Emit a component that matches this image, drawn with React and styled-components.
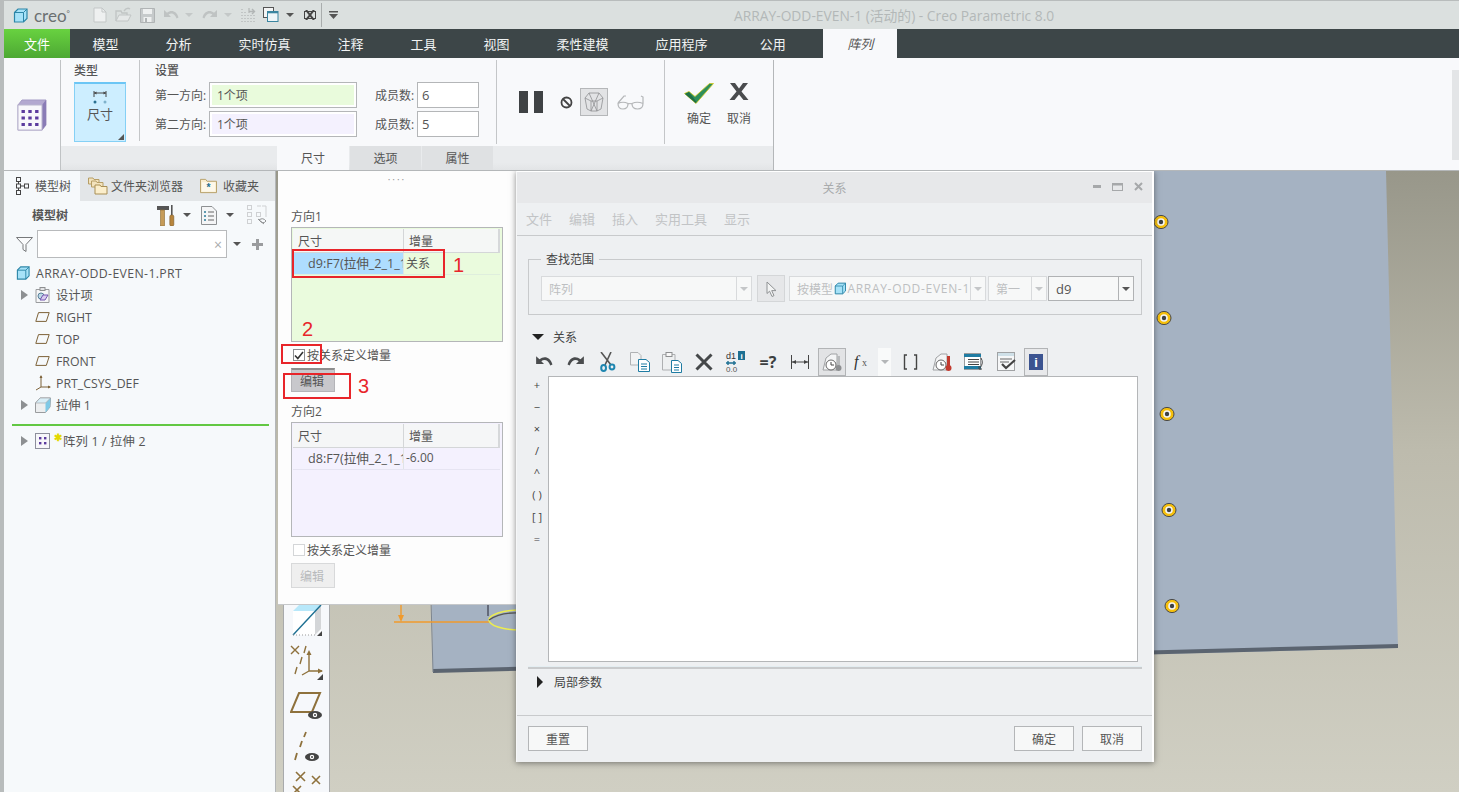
import React from 'react'
import styled, { createGlobalStyle } from 'styled-components'

const GlobalStyle = createGlobalStyle`
  html, body { margin: 0; padding: 0; background: #b8bcbc; overflow: hidden; }
  * { box-sizing: border-box; }
  body { font-family: "Open Sans", "Noto Sans CJK SC", sans-serif; font-size: 12px; color: #555; }
`

const Page = styled.div`
  width: 1459px;
  height: 792px;
  padding: 1px 0 0 4px;
  overflow: hidden;
  display: flex;
  flex-direction: column;
  background: #b8bcbc;
`

/* ---------- title bar ---------- */
const TitleBar = styled.div`
  height: 28px;
  flex: none;
  display: flex;
  align-items: center;
  background: #dbe0df;
  padding-left: 9px;
`
const Logo = styled.span`
  font-family: "Lato", sans-serif;
  font-size: 17px;
  color: #6b7072;
  margin-left: 6px;
  width: 60px;
  sup { font-size: 8px; line-height: 0; vertical-align: 6px; }
`
const QuickIcon = styled.span`
  display: flex;
  align-items: center;
  margin-left: ${p => p.$ml ?? 0}px;
`
const QuickSep = styled.span`
  width: 1px;
  height: 24px;
  background: #a9adad;
  margin: 0 7px 0 5px;
`
const AppTitle = styled.div`
  margin-left: 396px;
  font-size: 13.8px;
  color: #b3b8b8;
  white-space: nowrap;
`

/* ---------- menu ---------- */
const MenuBar = styled.div`
  height: 29px;
  flex: none;
  display: flex;
  background: #3d4648;
`
const FileTab = styled.div`
  width: 66px;
  margin-right: -1px;
  display: flex;
  align-items: center;
  justify-content: center;
  color: #fff;
  font-size: 13px;
  background: linear-gradient(#68d240, #4da833);
`
const MenuTab = styled.div`
  padding: 0 23.5px;
  margin-left: ${p => p.$ml ?? 0}px;
  display: flex;
  align-items: center;
  color: #f1f3f3;
  font-size: 13px;
  white-space: nowrap;
`
const ActiveMenuTab = styled.div`
  width: 74px;
  margin-left: 14px;
  display: flex;
  align-items: center;
  justify-content: center;
  background: #f8f9fb;
  color: #555;
  font-size: 13px;
  font-style: italic;
`

/* ---------- ribbon ---------- */
const Ribbon = styled.div`
  height: 113px;
  flex: none;
  display: flex;
  background: #f8f9fb;
  border-bottom: 1px solid #b4b7b9;
`
const RibbonIconCell = styled.div`
  width: 57px;
  flex: none;
  display: flex;
  align-items: center;
  padding-left: 13px;
  border-right: 1px solid #c0c3c5;
  margin-top: 2px;
`
const RibbonMain = styled.div`
  width: 713px;
  flex: none;
  display: flex;
  flex-direction: column;
  border-right: 1px solid #b4b7b9;
  margin-top: 2px;
`
const RibbonGroups = styled.div`
  height: 86px;
  display: flex;
`
const Group = styled.div`
  width: ${p => p.$w}px;
  flex: none;
  padding-left: ${p => p.$pl}px;
  border-right: ${p => (p.$line ? '1px solid #c4c6c8' : 'none')};
  height: ${p => p.$h ?? 84}px;
`
const GroupLabel = styled.div`
  height: 20px;
  margin-bottom: 2px;
  display: flex;
  align-items: center;
  font-size: 12px;
  color: #555;
  font-weight: 500;
`
const TypeCard = styled.div`
  width: 52px;
  height: 60px;
  position: relative;
  background: #cdeeff;
  border: 1px solid #85d0f5;
  border-top: 2px solid #6cc6f5;
  display: flex;
  flex-direction: column;
  align-items: center;
  padding-top: 6px;
  gap: 1px;
  font-size: 13px;
  line-height: 16px;
  color: #555;
`
const Corner = styled.i`
  position: absolute;
  right: 1px;
  bottom: 1px;
  width: 0;
  height: 0;
  border-style: solid;
  border-width: 0 0 6px 6px;
  border-color: transparent transparent #555 transparent;
`
const SettingGrid = styled.div`
  display: grid;
  grid-template-columns: 54px 148px 18px 42px 62px;
  grid-auto-rows: 26px;
  row-gap: 3px;
  align-items: center;
`
const FieldName = styled.span`
  color: #555;
  white-space: nowrap;
  grid-column: ${p => p.$col};
`
const CollectorBox = styled.div`
  height: 26px;
  border: 1px solid #b4b6b8;
  padding: 2px;
  background: #fff;
`
const CollectorFill = styled.div`
  height: 100%;
  background: ${p => p.$tint};
  padding-left: 5px;
  display: flex;
  align-items: center;
  color: #555;
`
const NumberBox = styled.div`
  height: 26px;
  border: 1px solid #b4b6b8;
  background: #fff;
  padding-left: 4px;
  display: flex;
  align-items: center;
  font-size: 13px;
  color: #555;
`
const ActionRow = styled.div`
  display: flex;
  align-items: center;
  padding-top: 28px;
`
const ToggleBox = styled.div`
  width: 28px;
  height: 28px;
  background: #e2e3e5;
  border: 1px solid #b5b7b9;
  display: flex;
  align-items: center;
  justify-content: center;
  margin-left: 7px;
`
const BigActions = styled.div`
  display: flex;
`
const BigAction = styled.div`
  width: 40px;
  display: flex;
  flex-direction: column;
  align-items: center;
  padding-top: 23px;
  gap: 4px;
  color: #555;
`
const BigActionIcon = styled.div`
  height: 22px;
  display: flex;
  align-items: flex-start;
  justify-content: center;
`
const RibbonTabs = styled.div`
  height: 24px;
  flex: none;
  display: flex;
  background: linear-gradient(#e9ebed 70%, #e2e4e6);
  padding-left: 216px;
`
const RibbonTab = styled.div`
  width: ${p => p.$w}px;
  display: flex;
  align-items: center;
  justify-content: center;
  margin-right: 1px;
  color: #555;
  background: ${p => (p.$active ? '#f8f9fb' : '#dfe1e3')};
`
const RibbonEnd = styled.div`
  flex: 1;
  display: flex;
  justify-content: flex-end;
  padding-top: 12px;
`
const RibbonStub = styled.div`
  width: 7px;
  height: 90px;
  background: #e3e5e7;
`

/* ---------- main area ---------- */
const Body = styled.div`
  flex: 1;
  min-height: 0;
  display: flex;
`
const LeftPanel = styled.div`
  width: 272px;
  flex: none;
  background: #f6f9fb;
  border-right: 1px solid #b4b7b9;
  display: flex;
  flex-direction: column;
`
const PanelTabs = styled.div`
  height: 30px;
  flex: none;
  display: flex;
  background: #e3e6e8;
`
const PanelTab = styled.div`
  display: flex;
  align-items: center;
  width: ${p => p.$w}px;
  padding-left: ${p => p.$pl}px;
  gap: ${p => p.$gap}px;
  color: #555;
  white-space: nowrap;
  background: ${p => (p.$active ? '#f6f9fb' : 'transparent')};
`
const TreeToolbar = styled.div`
  height: 28px;
  flex: none;
  display: flex;
  align-items: center;
  padding-left: 28px;
`
const TreeTitle = styled.div`
  width: 125px;
  font-weight: 700;
  color: #555;
`
const SearchRow = styled.div`
  height: 28px;
  flex: none;
  margin-top: 1px;
  display: flex;
  align-items: center;
  padding-left: 12px;
`
const SearchBox = styled.div`
  width: 190px;
  height: 28px;
  margin-left: 4px;
  background: #fff;
  border: 1px solid #b8babc;
  display: flex;
  align-items: center;
  justify-content: flex-end;
  padding-right: 4px;
  color: #a9abad;
  font-size: 14px;
`
const Tree = styled.div`
  margin-top: 4px;
  display: flex;
  flex-direction: column;
`
const TreeRow = styled.div`
  height: 22px;
  display: flex;
  align-items: center;
  padding-left: ${p => p.$pl}px;
  font-size: 12.3px;
  letter-spacing: ${p => p.$track ?? 0}px;
  color: #555;
  white-space: nowrap;
`
const Twisty = styled.i`
  width: 0;
  height: 0;
  margin-right: 7px;
  border-style: solid;
  border-width: 5px 0 5px 7px;
  border-color: transparent transparent transparent #8d9092;
`
const RowIcon = styled.span`
  width: ${p => p.$w ?? 21}px;
  flex: none;
  display: flex;
  align-items: center;
`
const Star = styled.span`
  width: 9px;
  flex: none;
  color: #e3d800;
  font-size: 10px;
  font-weight: 700;
  line-height: 1;
  align-self: flex-start;
  margin-top: 2px;
`
const GreenRule = styled.div`
  height: 2px;
  margin: 8px 6px 4px 8px;
  background: #62c843;
`

const Viewport = styled.div`
  flex: 1;
  position: relative;
  overflow: hidden;
  background: linear-gradient(#98978a, #bdbbad 45%, #d0cfc3);
`
const Scene = styled.svg`
  position: absolute;
  inset: 0;
  display: block;
`
const SideBar = styled.div`
  position: absolute;
  left: 7px;
  top: 434px;
  bottom: 0;
  width: 47px;
  background: #f6f8fb;
  border-left: 1px solid #a8aaac;
  border-right: 1px solid #a8aaac;
  display: flex;
  flex-direction: column;
  align-items: center;
`
const SideTool = styled.div`
  height: ${p => p.$h}px;
  flex: none;
  display: flex;
  align-items: flex-start;
`

/* ---------- pattern panel ---------- */
const PatternPanel = styled.div`
  position: absolute;
  left: 2px;
  top: 0;
  width: 246px;
  height: 434px;
  background: #fdfdfd;
  border-bottom: 1px solid #c6c8ca;
  padding: 0 0 0 13px;
`
const Grip = styled.div`
  height: 16px;
  width: 212px;
  text-align: center;
  color: #999;
  font-size: 10px;
  line-height: 16px;
  letter-spacing: 2px;
`
const DirLabel = styled.div`
  height: 14px;
  line-height: 14px;
  margin-top: ${p => p.$mt}px;
  color: #555;
`
const IncTable = styled.div`
  width: 212px;
  height: 115px;
  margin-top: ${p => p.$mt}px;
  background: ${p => p.$tint};
  border: 1px solid #b4b6b8;
  padding: 1px 2px 0 1px;
`
const TableRow = styled.div`
  display: grid;
  grid-template-columns: 110px 1fr;
  height: ${p => p.$h}px;
  color: #555;
  background: ${p => p.$bg ?? 'transparent'};
  border-bottom: 1px solid ${p => p.$line};
  border-right: ${p => (p.$stub ? '2px solid #d6d8da' : 'none')};
`
const HeadCell = styled.div`
  display: flex;
  align-items: center;
  padding-left: ${p => p.$pl}px;
  & + & { border-left: 1px solid #d4d6d8; }
`
const DataCell = styled.div`
  display: flex;
  align-items: center;
  overflow: hidden;
  white-space: nowrap;
  font-size: ${p => p.$fs ?? 12}px;
  padding-left: ${p => p.$pl}px;
  padding-bottom: 2px;
  background: ${p => p.$bg ?? 'transparent'};
  & + & { border-left: 1px solid #e0e4e6; }
`
const CheckRow = styled.div`
  height: 18px;
  margin-top: 4px;
  padding-left: 2px;
  display: flex;
  align-items: center;
  gap: 2px;
  color: #555;
`
const Check = styled.div`
  width: 12px;
  height: 12px;
  background: #fff;
  border: 1px solid ${p => (p.$on ? '#8c8e90' : '#d4d6d8')};
  display: flex;
  align-items: center;
  justify-content: center;
`
const EditBtn = styled.div`
  width: 44px;
  height: ${p => p.$h}px;
  margin-top: 4px;
  padding-right: 2px;
  display: flex;
  align-items: center;
  justify-content: center;
  background: ${p => (p.$on ? '#c8c8cc' : '#efefef')};
  border: 1px solid ${p => (p.$on ? '#b4b4b8' : '#d8d9da')};
  border-top: ${p => (p.$on ? '2px solid #8e8e8e' : '1px solid #d8d9da')};
  color: ${p => (p.$on ? '#555' : '#b8babc')};
`
const RedBox = styled.div`
  position: absolute;
  left: ${p => p.$x}px;
  top: ${p => p.$y}px;
  width: ${p => p.$w}px;
  height: ${p => p.$h}px;
  border: 2px solid #e8252a;
`
const RedDigit = styled.div`
  position: absolute;
  left: ${p => p.$x}px;
  top: ${p => p.$y}px;
  font-family: "Liberation Sans", sans-serif;
  font-size: 20px;
  line-height: 20px;
  color: #e8252a;
`

/* ---------- relation dialog ---------- */
const Dialog = styled.div`
  position: absolute;
  left: 240px;
  top: 0;
  width: 638px;
  height: 591px;
  background: #eef0f2;
  border-top: 1px solid #fff;
  border-left: 1px solid #f6f7f8;
  border-right: 2px solid #fff;
  box-shadow: 0 1px 6px rgba(40, 40, 40, 0.55);
  display: flex;
  flex-direction: column;
`
const DialogTitle = styled.div`
  height: 31px;
  flex: none;
  display: flex;
  align-items: center;
  justify-content: center;
  position: relative;
  background: #e7e8ea;
  color: #a8aaac;
`
const WindowButtons = styled.div`
  position: absolute;
  right: 9px;
  top: 10px;
  display: flex;
  gap: 11px;
  align-items: center;
`
const DialogMenu = styled.div`
  height: 33px;
  flex: none;
  display: flex;
  align-items: center;
  gap: 17px;
  padding: 0 0 2px 9px;
  margin-bottom: 23px;
  color: #c2c4c6;
  font-size: 13px;
  border-bottom: 1px solid #c8cacc;
`
const DialogBody = styled.div`
  padding: 0 11px;
  display: flex;
  flex-direction: column;
`
const ScopeBox = styled.div`
  width: 614px;
  height: 56px;
  position: relative;
  border: 1px solid #c8cacc;
  padding: 16px 0 0 12px;
  display: flex;
  align-items: flex-start;
`
const ScopeLegend = styled.span`
  position: absolute;
  left: 12px;
  top: -8px;
  padding: 0 5px;
  line-height: 15px;
  background: #eef0f2;
  color: #444;
`
const Combo = styled.div`
  width: ${p => p.$w}px;
  height: 25px;
  flex: none;
  margin-left: ${p => p.$ml ?? 0}px;
  display: flex;
  background: #f7f8f8;
  border: 1px solid ${p => (p.$on ? '#b0b2b4' : '#d8dadc')};
  color: ${p => (p.$on ? '#555' : '#bdbfc1')};
  font-size: ${p => (p.$on ? 13 : 12)}px;
`
const ComboText = styled.div`
  flex: 1;
  min-width: 0;
  display: flex;
  align-items: center;
  gap: 1px;
  overflow: hidden;
  white-space: nowrap;
  padding-left: ${p => p.$pl ?? 7}px;
`
const TrackedText = styled.span`
  letter-spacing: 0.7px;
`
const ComboArrow = styled.div`
  width: 15px;
  flex: none;
  display: flex;
  align-items: center;
  justify-content: center;
  border-left: 1px solid ${p => (p.$on ? '#b0b2b4' : '#d8dadc')};
`
const Caret = styled.i`
  width: 0;
  height: 0;
  border-style: solid;
  border-width: 4px 4px 0 4px;
  border-color: ${p => p.$color ?? '#555'} transparent transparent transparent;
  margin-left: ${p => p.$ml ?? 0}px;
  margin-right: ${p => p.$mr ?? 0}px;
`
const PickBtn = styled.div`
  width: 28px;
  height: 27px;
  flex: none;
  margin: -1px 4px 0 5px;
  background: #e6e7e9;
  border: 1px solid #d4d6d8;
  display: flex;
  align-items: center;
  justify-content: center;
`
const SectionHead = styled.div`
  height: ${p => p.$h}px;
  display: flex;
  align-items: center;
  gap: 9px;
  padding: 0 0 2px 4px;
  margin-top: ${p => p.$mt}px;
  color: #444;
`
const TriDown = styled.i`
  width: 0;
  height: 0;
  border-style: solid;
  border-width: 6px 6px 0 6px;
  border-color: #222 transparent transparent transparent;
`
const TriRight = styled.i`
  width: 0;
  height: 0;
  margin-left: 5px;
  margin-right: 2px;
  border-style: solid;
  border-width: 6px 0 6px 6px;
  border-color: transparent transparent transparent #222;
`
const ToolRow = styled.div`
  height: 28px;
  display: flex;
`
const Tool = styled.div`
  width: ${p => p.$w ?? 32}px;
  flex: none;
  margin-left: ${p => p.$ml ?? 0}px;
  margin-right: ${p => p.$mr ?? 0}px;
  display: flex;
  align-items: center;
  justify-content: center;
  font-size: 16px;
  font-weight: 700;
  color: #3c3f41;
  background: ${p => (p.$bg ? p.$bg : 'transparent')};
  border: ${p => (p.$box ? '1px solid #b2b4b6' : 'none')};
`
const EditorRow = styled.div`
  height: 286px;
  display: flex;
`
const SymbolColumn = styled.div`
  width: 20px;
  flex: none;
  margin-top: -3px;
  padding-right: 2px;
`
const SymbolKey = styled.div`
  height: 22px;
  display: flex;
  align-items: center;
  justify-content: center;
  color: #444;
  font-size: 11px;
`
const Editor = styled.div`
  width: 590px;
  background: #fff;
  border: 1px solid #b4b6b8;
`
const Sash = styled.div`
  height: 3px;
  width: 614px;
  margin-top: 4px;
  background: #c9cbcd;
  border-top: 1px solid #e4eef2;
`
const DialogFooter = styled.div`
  margin-top: auto;
  height: 47px;
  flex: none;
  border-top: 1px solid #c8cacc;
  padding: 10px 10px 0 11px;
  display: flex;
  gap: 8px;
`
const FootBtn = styled.div`
  width: 60px;
  height: 25px;
  margin-right: ${p => (p.$push ? 'auto' : '0')};
  display: flex;
  align-items: center;
  justify-content: center;
  background: #f7f8f8;
  border: 1px solid #b4b6b8;
  color: #555;
`

/* ---------- drawings ---------- */
const CubeIcon = ({ size = 15 }) => (
  <svg width={size} height={size} viewBox="0 0 15 15">
    <path d="M1.5 4.5 5 1 14 1 14 10.5 10.5 14 1.5 14Z" fill="#a6e2f8" stroke="#2c86a8" strokeWidth="1.2" />
    <path d="M1.5 4.5H10.5V14M10.5 4.5 14 1" fill="none" stroke="#2c86a8" strokeWidth="1" />
  </svg>
)
const NewIcon = () => (
  <svg width="14" height="16" viewBox="0 0 14 16">
    <path d="M1 1H9L13 5V15H1Z" fill="#eef0f0" stroke="#c3c7c7" />
    <path d="M9 1V5H13" fill="none" stroke="#c3c7c7" />
  </svg>
)
const OpenIcon = () => (
  <svg width="17" height="16" viewBox="0 0 17 16">
    <path d="M1 14V4H6L7 6H12V8" fill="none" stroke="#c1c5c5" strokeWidth="1.4" />
    <path d="M1 14 4 8H16L13 14Z" fill="#e5e8e8" stroke="#c1c5c5" />
    <path d="M9 4Q12 0 15 2" fill="none" stroke="#c1c5c5" strokeWidth="1.4" />
  </svg>
)
const SaveIcon = () => (
  <svg width="15" height="15" viewBox="0 0 15 15">
    <path d="M.5.5H14.5V14.5H.5Z" fill="#c6cacb" stroke="#b0b4b5" />
    <rect x="3" y="1" width="9" height="5" fill="#eef0f0" />
    <rect x="3.5" y="9" width="8" height="5" fill="#eef0f0" />
    <rect x="5" y="10" width="2" height="4" fill="#b0b4b5" />
  </svg>
)
const UndoGlyph = ({ flip, color = '#bfc3c3', w = 16 }) => (
  <svg width={w} height={w * 0.75} viewBox="0 0 16 12" style={flip ? { transform: 'scaleX(-1)' } : undefined}>
    <path d="M1 1V8H8L5.6 5.6C8 3.6 11.6 4 13.6 9.4L15.5 8.4C13.6 1.6 8 .4 4 3.8Z" fill={color} />
  </svg>
)
const RegenIcon = () => (
  <svg width="16" height="16" viewBox="0 0 16 16" stroke="#c1c5c5" fill="none">
    <path d="M1 2.5H4M1 5.5H6M1 8.5H15M1 11.5H15M1 14.5H15" strokeDasharray="2 1" />
    <path d="M9 4.5H14M12 2 14.5 4.5 12 7" stroke="#b2b6b6" strokeWidth="1.4" />
    <path d="M9 1V6" stroke="#b2b6b6" strokeWidth="1.2" />
  </svg>
)
const WindowsIcon = () => (
  <svg width="16" height="16" viewBox="0 0 16 16">
    <rect x=".5" y=".5" width="10" height="10" fill="#f4f5f5" stroke="#555" />
    <rect x="4.5" y="4.5" width="10.5" height="10" fill="#eef5f8" stroke="#3a85a0" />
    <rect x="4.5" y="4.5" width="10.5" height="1.8" fill="#3a85a0" />
  </svg>
)
const CloseSmall = () => (
  <svg width="12" height="10" viewBox="0 0 12 10">
    <rect x=".5" y="1.5" width="11" height="7" fill="none" stroke="#444" />
    <path d="M2 0 10 10M10 0 2 10" stroke="#444" strokeWidth="2" />
  </svg>
)
const CustomizeIcon = () => (
  <svg width="9" height="8" viewBox="0 0 9 8">
    <rect width="9" height="1.5" fill="#555" />
    <path d="M0 3H9L4.5 8Z" fill="#555" />
  </svg>
)
const PatternIcon = () => (
  <svg width="30" height="32" viewBox="0 0 30 32">
    <path d="M1 6 5 1H29V26L25 31H1Z" fill="#b3a8d0" stroke="#a59ac4" />
    <path d="M25 6 29 1V26L25 31Z" fill="#8a7cb6" />
    <rect x="1" y="6" width="24" height="25" fill="#f8f7fb" stroke="#bab5cd" />
    {[0, 1, 2].map(r => [0, 1, 2].map(c => (
      <rect key={`${r}${c}`} x={4.5 + c * 6.8} y={11 + r * 6.5} width="3.4" height="3" fill="#5c3b9e" />
    )))}
  </svg>
)
const DimIcon = () => (
  <svg width="14" height="15" viewBox="0 0 14 15">
    <path d="M1 1V7M13 1V7M1 3H13" stroke="#444" fill="none" />
    <path d="M1 3 3.5 1.5V4.5ZM13 3 10.5 1.5V4.5Z" fill="#444" />
    <circle cx="2" cy="12" r="1.5" fill="#2a7090" />
    <circle cx="12" cy="12" r="1.5" fill="#7fb2cb" />
  </svg>
)
const PauseIcon = () => (
  <svg width="24" height="22" viewBox="0 0 24 22">
    <rect x="0" y="0" width="9" height="22" fill="#3f4244" />
    <rect x="15" y="0" width="9" height="22" fill="#3f4244" />
  </svg>
)
const NoIcon = () => (
  <svg width="13" height="13" viewBox="0 0 13 13" fill="none" stroke="#444" strokeWidth="1.8">
    <circle cx="6.5" cy="6.5" r="5" />
    <path d="M3 3 10 10" />
  </svg>
)
const VerifyIcon = () => (
  <svg width="20" height="20" viewBox="0 0 20 20" fill="none" stroke="#8f9193" strokeWidth=".8">
    <path d="M1 6 5 1H15L19 6 17 17 13 19H7L3 17Z" />
    <path d="M5 1 13 19M15 1 7 19M1 6 7 9V19M19 6 13 9V19M7 9H13" />
  </svg>
)
const GlassesIcon = () => (
  <svg width="27" height="15" viewBox="0 0 27 15" fill="none" stroke="#b4b6b8" strokeWidth="1.2">
    <path d="M1 8.5Q6 6 11 8.5Q11 14 6 14Q1 14 1 8.5ZM15 8.5Q20 6 26 8.5Q26 14 20.5 14Q15 14 15 8.5ZM11 9Q13 8 15 9M1 8 7 1H9M26 8V2L24 1" />
  </svg>
)
const CheckBig = () => (
  <svg width="30" height="21" viewBox="0 0 30 21">
    <path d="M0.5 10.5 5 8.5 11 13.5 25.5 0.5 29.5 0.5 12 20.5Z" fill="#2f8f5b" stroke="#d3c81a" strokeWidth="0.8" />
    <path d="M1 11 11.5 20 12.5 19 5 9Z" fill="#1f7045" />
  </svg>
)
const CrossBig = () => (
  <svg width="20" height="17" viewBox="0 0 20 17">
    <path d="M1 0H6L10 5.5 14 0H19L12.5 8.5 19.5 17H14.5L10 11.5 5.5 17H.5L7.5 8.5Z" fill="#4a4c4e" />
  </svg>
)
const TreeTabIcon = () => (
  <svg width="14" height="18" viewBox="0 0 14 18" fill="none" stroke="#444">
    <rect x=".5" y=".5" width="4" height="4" />
    <rect x=".5" y="7" width="4" height="4" />
    <rect x=".5" y="13.5" width="4" height="4" />
    <rect x="8.5" y="7" width="4" height="4" />
    <path d="M2.5 4.5V7M2.5 11V13.5M4.5 9H8.5" />
  </svg>
)
const FoldersIcon = () => (
  <svg width="20" height="18" viewBox="0 0 20 18">
    <path d="M.5 7V1H5L6 2.5H11V7Z" fill="#f3e3bd" stroke="#b69e66" />
    <path d="M3.5 10V4H8L9 5.5H15V10Z" fill="#f3e3bd" stroke="#b69e66" />
    <path d="M7 17V8H12L13 9.5H19V17Z" fill="#fbeecb" stroke="#a98f55" />
  </svg>
)
const FavIcon = () => (
  <svg width="17" height="16" viewBox="0 0 18 16">
    <path d="M.5 15V1H6L7.5 3H17.5V15Z" fill="#f9edcf" stroke="#b69e66" />
    <rect x="2" y="4" width="14" height="10" fill="#fdf8ea" />
    <text x="9" y="13" textAnchor="middle" fontSize="11" fontWeight="700" fill="#1d6f92" fontFamily="Liberation Sans">*</text>
  </svg>
)
const ToolsIcon = () => (
  <svg width="20" height="21" viewBox="0 0 20 21">
    <path d="M0 1H12V5H0Z" fill="#555" />
    <rect x="3.5" y="5" width="4" height="16" fill="#c59b58" stroke="#8b6a33" strokeWidth=".6" />
    <rect x="14" y="0" width="1.6" height="10" fill="#555" />
    <rect x="12.8" y="10" width="4" height="11" rx="1.5" fill="#b8853c" stroke="#7a5a28" strokeWidth=".6" />
  </svg>
)
const ListIcon = () => (
  <svg width="16" height="19" viewBox="0 0 16 19">
    <path d="M.5.5H11L15.5 5V18.5H.5Z" fill="#f4f5f6" stroke="#8d9092" />
    <path d="M3 6H5M3 10H5M3 14H5" stroke="#2c7b98" strokeWidth="1.4" />
    <path d="M7 6H13M7 10H13M7 14H13" stroke="#666" />
  </svg>
)
const ShowHideIcon = () => (
  <svg width="20" height="20" viewBox="0 0 20 20" fill="none" stroke="#cfd1d3">
    <rect x=".5" y=".5" width="4" height="4" />
    <rect x=".5" y="7.5" width="4" height="4" />
    <rect x=".5" y="14.5" width="4" height="4" />
    <rect x="9.5" y="7.5" width="4" height="4" />
    <path d="M15 1H19V12M10 1H14" />
    <path d="M11 14 17 19M12 15Q16 12 19 16Q16 20 12 15" stroke="#8f9193" />
  </svg>
)
const FunnelIcon = () => (
  <svg width="17" height="15" viewBox="0 0 17 15">
    <path d="M.5.5H16.5L10 7.5V14.5L7 12.5V7.5Z" fill="#fafbfc" stroke="#77797b" />
  </svg>
)
const PlusIcon = () => (
  <svg width="11" height="11" viewBox="0 0 11 11">
    <path d="M4 0H7V4H11V7H7V11H4V7H0V4H4Z" fill="#9a9c9e" />
  </svg>
)
const DesignIcon = () => (
  <svg width="15" height="16" viewBox="0 0 15 16">
    <path d="M1 2.5H14V15.5H1Z" fill="#f5f6f7" stroke="#9a9c9e" />
    <rect x="5" y=".5" width="5" height="3" fill="#e2e3e5" stroke="#8d8f91" />
    <circle cx="6" cy="9" r="3" fill="#bcd9e6" stroke="#58809a" />
    <path d="M5 13 8 8H13L10 13Z" fill="#d9cdf0" stroke="#7456b0" />
  </svg>
)
const PlaneIcon = ({ w = 15, h = 10, color = '#7d6238', sw = 1 }) => (
  <svg width={w} height={h} viewBox="0 0 15 10">
    <path d="M3.5.6H14.2L11.3 9.4H.8Z" fill="none" stroke={color} strokeWidth={sw} />
  </svg>
)
const CsysIcon = () => (
  <svg width="16" height="16" viewBox="0 0 16 16" fill="none" stroke="#7d6238">
    <path d="M6 1V12H15M6 12 1 15" />
    <path d="M6 0 4.5 3H7.5ZM16 12 13 10.5V13.5Z" fill="#7d6238" stroke="none" />
  </svg>
)
const ExtrudeIcon = () => (
  <svg width="16" height="16" viewBox="0 0 16 16">
    <path d="M.5 6 5 1H15.5L15 10 10.5 15.5H.5Z" fill="#eceeef" stroke="#9a9c9e" />
    <path d="M10.5 6 15.5 1 15 10 10.5 15.5Z" fill="#7fc9e6" />
    <path d="M.5 6H10.5L15.5 1H5Z" fill="#d8eef7" stroke="#9a9c9e" strokeWidth=".6" />
  </svg>
)
const MiniPatternIcon = () => (
  <svg width="15" height="16" viewBox="0 0 15 16">
    <rect x=".5" y=".5" width="14" height="15" fill="#f7f7fa" stroke="#8d8f9c" />
    {[0, 1].map(r => [0, 1].map(c => (
      <rect key={`${r}${c}`} x={4 + c * 5} y={4 + r * 5} width="2.4" height="2.4" fill="#5c3b9e" />
    )))}
  </svg>
)
const TinyCheck = () => (
  <svg width="10" height="9" viewBox="0 0 10 9">
    <path d="M1 4.5 3.8 7.5 9 1" fill="none" stroke="#333" strokeWidth="1.6" />
  </svg>
)
const DatumIcon = () => (
  <svg width="32" height="32" viewBox="0 0 32 32">
    <path d="M8 0H30V26L24 30H2V6Z" fill="#fff" />
    <path d="M2 6 8 0H30L24 6Z" fill="#b8e8fa" />
    <path d="M24 6 30 0V24L24 30Z" fill="#d4d6d8" />
    <path d="M2 30 30 0" stroke="#1d6f92" strokeWidth="1.4" />
    <path d="M2 30H24" stroke="#999" strokeDasharray="1 2" />
    <path d="M31 31H26L31 26Z" fill="#444" />
  </svg>
)
const CsysDisplayIcon = () => (
  <svg width="34" height="36" viewBox="0 0 34 36" fill="none" stroke="#8e713c" strokeWidth="1.4">
    <path d="M1 1 9 9M9 1 1 9M16 1 14 8M12 12 10 19M7 22 5 29" />
    <path d="M19 8V26H32M19 26 12 30" />
    <path d="M19 5 16.5 10H21.5ZM33 26 28 23.5V28.5Z" fill="#8e713c" stroke="none" />
    <path d="M33 35H27L33 29Z" fill="#444" stroke="none" />
  </svg>
)
const EyeMark = ({ x, y }) => (
  <g>
    <ellipse cx={x} cy={y} rx="7" ry="4" fill="#444" />
    <circle cx={x} cy={y} r="2.2" fill="#fff" />
    <circle cx={x} cy={y} r="1" fill="#444" />
  </g>
)
const PlaneEyeIcon = () => (
  <svg width="34" height="29" viewBox="0 0 34 29">
    <path d="M9 1H30L22 20H1Z" fill="none" stroke="#8e713c" strokeWidth="2" />
    <EyeMark x={25} y={23} />
  </svg>
)
const AxisEyeIcon = () => (
  <svg width="30" height="32" viewBox="0 0 30 32">
    <path d="M14 1 12 6M10 10 8 16M5 22 3 29" stroke="#8e713c" strokeWidth="1.8" fill="none" />
    <EyeMark x={20} y={26} />
  </svg>
)
const PointsIcon = () => (
  <svg width="30" height="24" viewBox="0 0 30 24" fill="none" stroke="#8e713c" strokeWidth="1.6">
    <path d="M4 1 13 10M13 1 4 10M20 5 28 13M28 5 20 13M1 15 9 23M9 15 1 23" />
  </svg>
)
const CursorIcon = () => (
  <svg width="11" height="16" viewBox="0 0 11 16">
    <path d="M1 1V12.5L3.6 10.2 6 15.5 8 14.6 5.7 9.6H10Z" fill="#f3f4f4" stroke="#909294" />
  </svg>
)
const WinMin = () => <svg width="8" height="3" viewBox="0 0 8 3"><rect width="8" height="3" fill="#a6a8aa" /></svg>
const WinMax = () => (
  <svg width="11" height="8" viewBox="0 0 11 8">
    <rect x=".5" y=".5" width="10" height="7" fill="none" stroke="#a6a8aa" />
    <rect width="11" height="2.5" fill="#a6a8aa" />
  </svg>
)
const WinClose = () => (
  <svg width="9" height="9" viewBox="0 0 9 9"><path d="M1 1 8 8M8 1 1 8" stroke="#a6a8aa" strokeWidth="2" /></svg>
)
const ScissorsIcon = () => (
  <svg width="16" height="20" viewBox="0 0 16 20" fill="none">
    <path d="M1 0 11 13M11 0 5 13" stroke="#555" strokeWidth="1.6" />
    <ellipse cx="3.6" cy="16" rx="2.4" ry="3" stroke="#1f86b0" strokeWidth="2" />
    <ellipse cx="12" cy="15" rx="2.4" ry="2.4" stroke="#1f86b0" strokeWidth="2" />
  </svg>
)
const CopyIcon = () => (
  <svg width="20" height="20" viewBox="0 0 20 20">
    <path d="M.5.5H8L11 3.5V13H.5Z" fill="#f2f3f4" stroke="#b0b2b4" />
    <path d="M8.5 7.5H16L19.5 10.5V19.5H8.5Z" fill="#fff" stroke="#1f7ca3" />
    <path d="M11 12H17M11 14.5H17M11 17H17" stroke="#1f7ca3" />
  </svg>
)
const PasteIcon = () => (
  <svg width="20" height="21" viewBox="0 0 20 21">
    <path d="M.5 2.5H13V18H.5Z" fill="#eef0f1" stroke="#aeb0b2" />
    <rect x="4" y=".5" width="6" height="4" fill="#f8f8f8" stroke="#8d8f91" />
    <path d="M9.5 8.5H16L19.5 11.5V20.5H9.5Z" fill="#fff" stroke="#1f7ca3" />
    <path d="M12 13H17M12 15.5H17M12 18H17" stroke="#1f7ca3" />
  </svg>
)
const RedCross = () => (
  <svg width="18" height="18" viewBox="0 0 18 18"><path d="M1.5 1.5 16.5 16.5M16.5 1.5 1.5 16.5" stroke="#45484a" strokeWidth="3" /></svg>
)
const ParamsIcon = () => (
  <svg width="22" height="22" viewBox="0 0 22 22" fontFamily="Liberation Sans">
    <text x="1" y="8" fontSize="9" fontWeight="400" fill="#333">d1</text>
    <path d="M1 12H11M3 10V14M9 10V14" stroke="#1d6f92" strokeWidth="1.4" />
    <text x="1" y="21" fontSize="8" fontWeight="400" fill="#555">0.0</text>
    <rect x="13" y="0" width="7" height="9" fill="#1d6f92" />
    <text x="16.5" y="8" fontSize="8" fontWeight="700" textAnchor="middle" fill="#fff">i</text>
  </svg>
)
const DimsIcon = () => (
  <svg width="18" height="14" viewBox="0 0 18 14">
    <path d="M.5 0V14M17.5 0V14M1 7H17" stroke="#444" />
    <path d="M1 7 5 5V9ZM17 7 13 5V9Z" fill="#444" />
  </svg>
)
const GaugeIcon = ({ hot }) => (
  <svg width="20" height="20" viewBox="0 0 20 20" fill="none">
    <path d="M1 18 4 6 9 2H15V18Z" fill="#f4f5f6" stroke="#a0a2a4" />
    <circle cx="9" cy="13" r="5" fill="#fff" stroke="#666" />
    <path d="M9 10V13H12" stroke="#444" />
    <rect x="15" y="4" width="3" height="11" fill={hot ? '#c23a2e' : '#b8babc'} />
    <circle cx="16.5" cy="16" r="3" fill={hot ? '#c23a2e' : '#8d8f91'} />
  </svg>
)
const FxIcon = () => (
  <svg width="18" height="16" viewBox="0 0 18 16" fontFamily="Liberation Serif">
    <text x="0" y="13" fontSize="16" fontStyle="italic" fontWeight="400" fill="#333">f</text>
    <text x="8" y="12" fontSize="10" fontWeight="400" fill="#555">x</text>
  </svg>
)
const BracketsIcon = () => (
  <svg width="15" height="16" viewBox="0 0 15 16" fill="none" stroke="#444" strokeWidth="1.4">
    <path d="M4 1H1.5V15H4M11 1H13.5V15H11" />
  </svg>
)
const SheetIcon = () => (
  <svg width="20" height="19" viewBox="0 0 20 19">
    <rect x=".5" y=".5" width="16" height="16" fill="#fff" stroke="#9a9c9e" />
    <rect x="0" y="1" width="17" height="3" fill="#1f7ca3" />
    <rect x="0" y="13" width="17" height="3" fill="#1f7ca3" />
    <path d="M4 6.5H15M4 9H15M4 11.5H15" stroke="#444" />
    <path d="M17 5Q20 10 16 15M15 13V16H18" fill="none" stroke="#444" />
  </svg>
)
const VerifyDoc = () => (
  <svg width="19" height="20" viewBox="0 0 19 20">
    <rect x=".5" y=".5" width="17" height="18" fill="#f6f7f8" stroke="#a0a2a4" />
    <rect x="1" y="1" width="16" height="3" fill="#cfe0e8" />
    <path d="M3 7H15M3 10H12" stroke="#666" />
    <path d="M5 12 9 16 18 8" fill="none" stroke="#444" strokeWidth="2.2" />
  </svg>
)
const InfoIcon = () => (
  <svg width="14" height="16" viewBox="0 0 14 16" fontFamily="Liberation Sans">
    <rect width="14" height="16" fill="#3b5390" />
    <text x="7" y="13" fontSize="13" fontWeight="700" textAnchor="middle" fill="#fff">i</text>
  </svg>
)

const pins = [[1161, 222], [1164, 318], [1167, 414], [1169, 510], [1172, 606]]
const menus = ['模型', '分析', '实时仿真', '注释', '工具', '视图', '柔性建模', '应用程序']
const symbols = ['+', '−', '×', '/', '^', '( )', '[ ]', '=']

const Pattern3D = () => (
  <Scene width="1183" height="621" viewBox="276 171 1183 621">
    <polygon points="425,171 1386,171 1398,648 433,672" fill="#a5b2c2" />
    <polygon points="433,669 1398,644 1398,648 433,673" fill="#5b6470" />
    <path d="M431 600 433 672" stroke="#7c8590" strokeWidth="1" />
    <path d="M394 622H489" stroke="#f09a2c" strokeWidth="1.4" />
    <path d="M401 605V620" stroke="#f09a2c" strokeWidth="1.4" />
    <path d="M398 615H404L401 622Z" fill="#f09a2c" />
    <ellipse cx="520" cy="620" rx="31" ry="10" fill="none" stroke="#ecec50" strokeWidth="1.6" />
    <path d="M489 620Q500 612 520 613" fill="none" stroke="#555" strokeWidth="1.4" />
    <path d="M488 605V616" stroke="#223" strokeWidth="1" />
    {pins.map(([x, y]) => (
      <g key={y}>
        <ellipse cx={x} cy={y} rx="7" ry="6.6" fill="#f5bf0c" stroke="#4a4a4a" />
        <circle cx={x} cy={y} r="3.8" fill="#f4f4f4" />
        <circle cx={x} cy={y} r="2.2" fill="#3d4042" />
      </g>
    ))}
  </Scene>
)

const App = () => (
  <Page>
    <GlobalStyle />
    <TitleBar>
      <CubeIcon />
      <Logo>creo<sup>°</sup></Logo>
      <QuickIcon $ml={-1}><NewIcon /></QuickIcon>
      <QuickIcon $ml={8}><OpenIcon /></QuickIcon>
      <QuickIcon $ml={8}><SaveIcon /></QuickIcon>
      <QuickIcon $ml={8}><UndoGlyph /></QuickIcon>
      <QuickIcon $ml={6}><Caret $color="#c4c8c8" /></QuickIcon>
      <QuickIcon $ml={9}><UndoGlyph flip /></QuickIcon>
      <QuickIcon $ml={6}><Caret $color="#c4c8c8" /></QuickIcon>
      <QuickIcon $ml={8}><RegenIcon /></QuickIcon>
      <QuickIcon $ml={7}><WindowsIcon /></QuickIcon>
      <QuickIcon $ml={7}><Caret /></QuickIcon>
      <QuickIcon $ml={10}><CloseSmall /></QuickIcon>
      <QuickSep />
      <CustomizeIcon />
      <AppTitle>ARRAY-ODD-EVEN-1 (活动的) - Creo Parametric 8.0</AppTitle>
    </TitleBar>

    <MenuBar>
      <FileTab>文件</FileTab>
      {menus.map(m => <MenuTab key={m}>{m}</MenuTab>)}
      <MenuTab $ml={5}>公用</MenuTab>
      <ActiveMenuTab>阵列</ActiveMenuTab>
    </MenuBar>

    <Ribbon>
      <RibbonIconCell><PatternIcon /></RibbonIconCell>
      <RibbonMain>
        <RibbonGroups>
          <Group $w={79} $pl={13} $h={81} $line>
            <GroupLabel>类型</GroupLabel>
            <TypeCard>
              <DimIcon />
              尺寸
              <Corner />
            </TypeCard>
          </Group>
          <Group $w={357} $pl={15} $line>
            <GroupLabel>设置</GroupLabel>
            <SettingGrid>
              <FieldName>第一方向:</FieldName>
              <CollectorBox><CollectorFill $tint="#e9fbdc">1个项</CollectorFill></CollectorBox>
              <FieldName $col={4}>成员数:</FieldName>
              <NumberBox>6</NumberBox>
              <FieldName>第二方向:</FieldName>
              <CollectorBox><CollectorFill $tint="#f4f1fe">1个项</CollectorFill></CollectorBox>
              <FieldName $col={4}>成员数:</FieldName>
              <NumberBox>5</NumberBox>
            </SettingGrid>
          </Group>
          <Group $w={168} $pl={22} $line>
            <ActionRow>
              <PauseIcon />
              <QuickIcon $ml={17}><NoIcon /></QuickIcon>
              <ToggleBox><VerifyIcon /></ToggleBox>
              <QuickIcon $ml={9}><GlassesIcon /></QuickIcon>
            </ActionRow>
          </Group>
          <Group $w={107} $pl={14}>
            <BigActions>
              <BigAction><BigActionIcon><CheckBig /></BigActionIcon>确定</BigAction>
              <BigAction><BigActionIcon><CrossBig /></BigActionIcon>取消</BigAction>
            </BigActions>
          </Group>
        </RibbonGroups>
        <RibbonTabs>
          <RibbonTab $w={72} $active>尺寸</RibbonTab>
          <RibbonTab $w={71}>选项</RibbonTab>
          <RibbonTab $w={71}>属性</RibbonTab>
        </RibbonTabs>
      </RibbonMain>
      <RibbonEnd><RibbonStub /></RibbonEnd>
    </Ribbon>

    <Body>
      <LeftPanel>
        <PanelTabs>
          <PanelTab $w={76} $pl={12} $gap={5} $active><TreeTabIcon />模型树</PanelTab>
          <PanelTab $w={112} $pl={8} $gap={3}><FoldersIcon />文件夹浏览器</PanelTab>
          <PanelTab $w={80} $pl={8} $gap={6}><FavIcon />收藏夹</PanelTab>
        </PanelTabs>
        <TreeToolbar>
          <TreeTitle>模型树</TreeTitle>
          <ToolsIcon />
          <Caret $ml={6} $mr={10} />
          <ListIcon />
          <Caret $ml={9} $mr={13} />
          <ShowHideIcon />
        </TreeToolbar>
        <SearchRow>
          <FunnelIcon />
          <SearchBox>×</SearchBox>
          <Caret $ml={6} $mr={11} />
          <PlusIcon />
        </SearchRow>
        <Tree>
          <TreeRow $pl={12} $track={0.35}><RowIcon $w={20}><CubeIcon size={14} /></RowIcon>ARRAY-ODD-EVEN-1.PRT</TreeRow>
          <TreeRow $pl={17}><Twisty /><RowIcon><DesignIcon /></RowIcon>设计项</TreeRow>
          <TreeRow $pl={31}><RowIcon><PlaneIcon /></RowIcon>RIGHT</TreeRow>
          <TreeRow $pl={31}><RowIcon><PlaneIcon /></RowIcon>TOP</TreeRow>
          <TreeRow $pl={31}><RowIcon><PlaneIcon /></RowIcon>FRONT</TreeRow>
          <TreeRow $pl={31}><RowIcon><CsysIcon /></RowIcon>PRT_CSYS_DEF</TreeRow>
          <TreeRow $pl={17}><Twisty /><RowIcon><ExtrudeIcon /></RowIcon>拉伸 1</TreeRow>
          <GreenRule />
          <TreeRow $pl={17} $track={0.2}><Twisty /><RowIcon $w={19}><MiniPatternIcon /></RowIcon><Star>✱</Star>阵列 1 / 拉伸 2</TreeRow>
        </Tree>
      </LeftPanel>

      <Viewport>
        <Pattern3D />
        <SideBar>
          <SideTool $h={40}><DatumIcon /></SideTool>
          <SideTool $h={47}><CsysDisplayIcon /></SideTool>
          <SideTool $h={39}><PlaneEyeIcon /></SideTool>
          <SideTool $h={40}><AxisEyeIcon /></SideTool>
          <SideTool $h={24}><PointsIcon /></SideTool>
        </SideBar>

        <PatternPanel>
          <Grip>····</Grip>
          <DirLabel $mt={23}>方向1</DirLabel>
          <IncTable $mt={3} $tint="#eafbdd">
            <TableRow $h={24} $bg="#f5f7f6" $line="#d4d6d8" $stub>
              <HeadCell $pl={5}>尺寸</HeadCell>
              <HeadCell $pl={5}>增量</HeadCell>
            </TableRow>
            <TableRow $h={22} $line="#dfeedd">
              <DataCell $pl={15} $bg="#aeddff" $fs={12.6}>d9:F7(拉伸_2_1_1</DataCell>
              <DataCell $pl={2}>关系</DataCell>
            </TableRow>
          </IncTable>
          <CheckRow><Check $on><TinyCheck /></Check>按关系定义增量</CheckRow>
          <EditBtn $on $h={24}>编辑</EditBtn>
          <DirLabel $mt={13}>方向2</DirLabel>
          <IncTable $mt={3} $tint="#f4f1fe">
            <TableRow $h={24} $bg="#f5f6f7" $line="#d4d6d8" $stub>
              <HeadCell $pl={5}>尺寸</HeadCell>
              <HeadCell $pl={5}>增量</HeadCell>
            </TableRow>
            <TableRow $h={22} $line="#e6e4f2">
              <DataCell $pl={15} $fs={12.6}>d8:F7(拉伸_2_1_1</DataCell>
              <DataCell $pl={2}>-6.00</DataCell>
            </TableRow>
          </IncTable>
          <CheckRow><Check />按关系定义增量</CheckRow>
          <EditBtn $h={25}>编辑</EditBtn>

          <RedBox $x={14} $y={78} $w={153} $h={29} />
          <RedDigit $x={175} $y={84}>1</RedDigit>
          <RedBox $x={3} $y={173} $w={41} $h={20} />
          <RedDigit $x={24} $y={148}>2</RedDigit>
          <RedBox $x={5} $y={202} $w={68} $h={26} />
          <RedDigit $x={80} $y={205}>3</RedDigit>
        </PatternPanel>

        <Dialog>
          <DialogTitle>
            关系
            <WindowButtons><WinMin /><WinMax /><WinClose /></WindowButtons>
          </DialogTitle>
          <DialogMenu>
            <span>文件</span><span>编辑</span><span>插入</span><span>实用工具</span><span>显示</span>
          </DialogMenu>
          <DialogBody>
            <ScopeBox>
              <ScopeLegend>查找范围</ScopeLegend>
              <Combo $w={211}><ComboText>阵列</ComboText><ComboArrow><Caret $color="#c4c6c8" /></ComboArrow></Combo>
              <PickBtn><CursorIcon /></PickBtn>
              <Combo $w={197}>
                <ComboText>按模型<CubeIcon size={13} /><TrackedText>ARRAY-ODD-EVEN-1</TrackedText></ComboText>
                <ComboArrow><Caret $color="#c4c6c8" /></ComboArrow>
              </Combo>
              <Combo $w={59} $ml={2}><ComboText>第一</ComboText><ComboArrow><Caret $color="#c4c6c8" /></ComboArrow></Combo>
              <Combo $w={86} $ml={1} $on><ComboText>d9</ComboText><ComboArrow $on><Caret /></ComboArrow></Combo>
            </ScopeBox>
            <SectionHead $mt={13} $h={20}><TriDown />关系</SectionHead>
            <ToolRow>
              <Tool><UndoGlyph color="#4a4c4e" w={18} /></Tool>
              <Tool><UndoGlyph flip color="#4a4c4e" w={18} /></Tool>
              <Tool><ScissorsIcon /></Tool>
              <Tool><CopyIcon /></Tool>
              <Tool><PasteIcon /></Tool>
              <Tool><RedCross /></Tool>
              <Tool><ParamsIcon /></Tool>
              <Tool>=?</Tool>
              <Tool><DimsIcon /></Tool>
              <Tool $w={28} $ml={2} $mr={2} $box $bg="#e2e3e5"><GaugeIcon /></Tool>
              <Tool $w={30}><FxIcon /></Tool>
              <Tool $w={13} $mr={3} $bg="#f9fafa"><Caret $color="#b4b6b8" /></Tool>
              <Tool><BracketsIcon /></Tool>
              <Tool><GaugeIcon hot /></Tool>
              <Tool><SheetIcon /></Tool>
              <Tool><VerifyDoc /></Tool>
              <Tool $w={24} $ml={2} $box $bg="#e8e9eb"><InfoIcon /></Tool>
            </ToolRow>
            <EditorRow>
              <SymbolColumn>
                {symbols.map(s => <SymbolKey key={s}>{s}</SymbolKey>)}
              </SymbolColumn>
              <Editor />
            </EditorRow>
            <Sash />
            <SectionHead $mt={4} $h={19}><TriRight />局部参数</SectionHead>
          </DialogBody>
          <DialogFooter>
            <FootBtn $push>重置</FootBtn>
            <FootBtn>确定</FootBtn>
            <FootBtn>取消</FootBtn>
          </DialogFooter>
        </Dialog>
      </Viewport>
    </Body>
  </Page>
)

export default App
